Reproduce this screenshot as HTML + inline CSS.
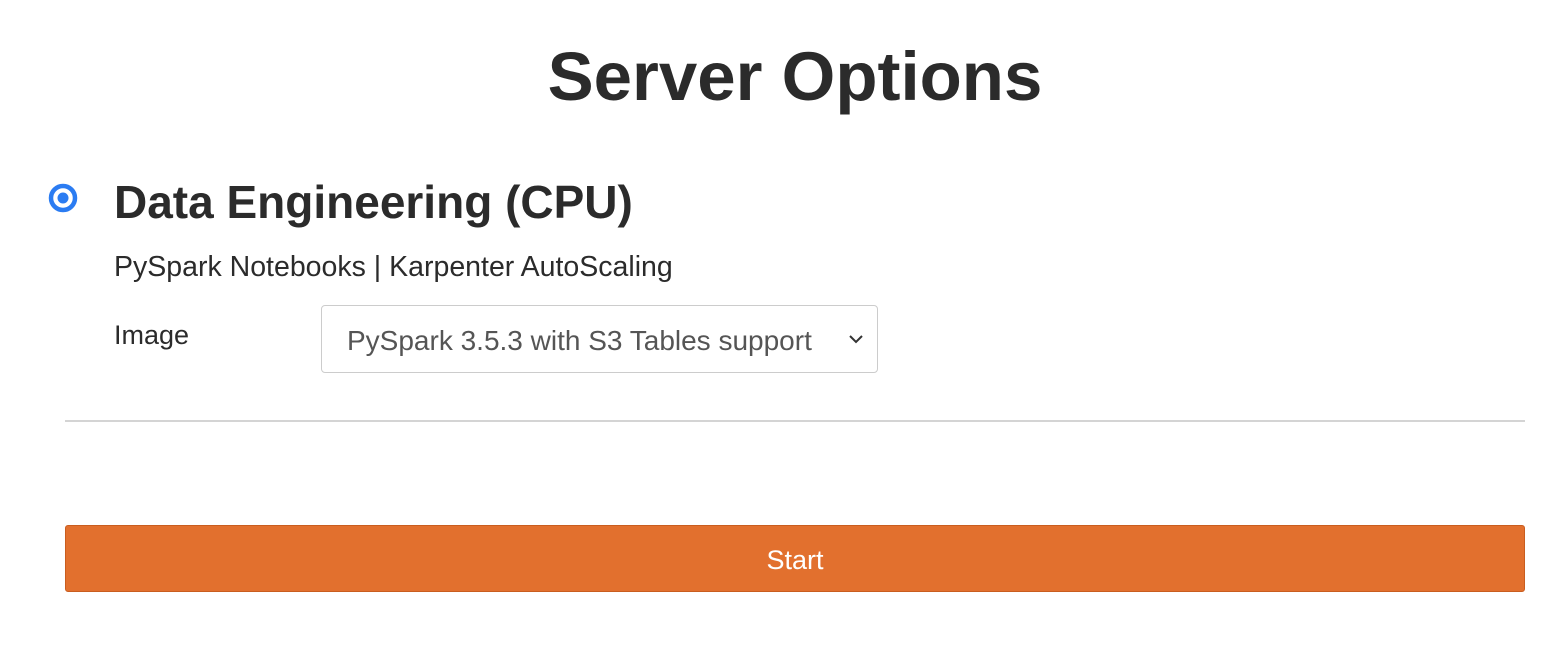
<!DOCTYPE html>
<html><head><style>
body{margin:0;width:1568px;height:656px;background:#fff;font-family:"Liberation Sans",sans-serif;color:#333;position:relative;overflow:hidden}
.a{position:absolute;white-space:nowrap}
</style></head><body>
<div class="a" style="left:0;width:1590px;text-align:center;top:37px;font-size:69px;font-weight:bold;color:#2b2b2b">Server Options</div>
<svg class="a" style="left:47px;top:182px" width="32" height="32"><circle cx="16" cy="16" r="12" fill="#fff" stroke="#2b7cf2" stroke-width="4.5"/><circle cx="16" cy="16" r="5.5" fill="#2b7cf2"/></svg>
<div class="a" style="left:114px;top:175px;font-size:46px;font-weight:bold;color:#2b2b2b">Data Engineering (CPU)</div>
<div class="a" style="left:114px;top:251px;font-size:28.5px;color:#2b2b2b">PySpark Notebooks | Karpenter AutoScaling</div>
<div class="a" style="left:114px;top:320px;font-size:27px;color:#2b2b2b">Image</div>
<div class="a" style="left:321px;top:305px;width:557px;height:68px;border:1px solid #ccc;border-radius:4px;box-sizing:border-box"></div>
<div class="a" style="left:347px;top:325px;font-size:28px;color:#555">PySpark 3.5.3 with S3 Tables support</div>
<svg class="a" style="left:848px;top:333px" width="16" height="12"><path d="M2 3 L8 9 L14 3" fill="none" stroke="#333" stroke-width="2"/></svg>
<div class="a" style="left:65px;top:420px;width:1460px;height:2px;background:#d4d4d4"></div>
<div class="a" style="left:65px;top:525px;width:1460px;height:67px;background:#e2702e;border:1px solid #c95d1f;border-radius:3px;box-sizing:border-box;color:#fff;font-size:27px;text-align:center;line-height:68px">Start</div>
</body></html>
